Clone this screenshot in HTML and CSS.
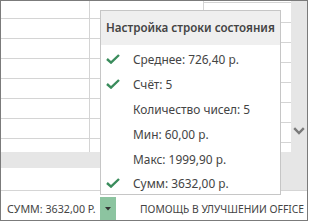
FILE: index.html
```html
<!DOCTYPE html>
<html lang="ru">
<head>
<meta charset="utf-8">
<link rel="stylesheet" href="styles.css">
</head>
<body>
<div class="frame">
  <div class="main">
    <div class="grid">
      <div class="col col-a"></div>
      <div class="col col-b"></div>
      <div class="col col-c"></div>
    </div>
    <div class="vscroll">
      <svg class="chev" width="12" height="8" viewBox="0 0 12 8"><path d="M1.2 1.2 L6 6 L10.8 1.2" fill="none" stroke="#7a7a7a" stroke-width="2.4"/></svg>
    </div>
  </div>
  <div class="hscroll"></div>
  <div class="tabs"><div class="corner"></div></div>
  <div class="status">
    <span class="sum">СУММ: 3632,00 Р.</span>
    <span class="dd"><svg width="6" height="4" viewBox="0 0 6 4"><path d="M0 0 H6 L3 3.5 Z" fill="#333"/></svg></span>
    <span class="help">ПОМОЩЬ В УЛУЧШЕНИИ OFFICE</span>
  </div>

  <div class="popup">
    <div class="title">Настройка строки состояния</div>
    <ul class="items">
      <li class="item on"><span class="chk"><svg width="14" height="10" viewBox="0 0 14 10"><path d="M1 5 L5 8.6 L13 1" fill="none" stroke="#3a8c5c" stroke-width="2.4"/></svg></span>Среднее: 726,40 р.</li>
      <li class="item on"><span class="chk"><svg width="14" height="10" viewBox="0 0 14 10"><path d="M1 5 L5 8.6 L13 1" fill="none" stroke="#3a8c5c" stroke-width="2.4"/></svg></span>Счёт: 5</li>
      <li class="item"><span class="chk"></span>Количество чисел: 5</li>
      <li class="item"><span class="chk"></span>Мин: 60,00 р.</li>
      <li class="item"><span class="chk"></span>Макс: 1999,90 р.</li>
      <li class="item on"><span class="chk"><svg width="14" height="10" viewBox="0 0 14 10"><path d="M1 5 L5 8.6 L13 1" fill="none" stroke="#3a8c5c" stroke-width="2.4"/></svg></span>Сумм: 3632,00 р.</li>
    </ul>
  </div>
</div>
</body>
</html>
```

FILE: styles.css
```css
* { box-sizing: border-box; }
html, body { margin: 0; padding: 0; background: #fff; }
body { width: 309px; height: 223px; overflow: hidden; font-family: "Noto Sans", "Open Sans", sans-serif; color: #444; }

.frame {
  position: relative;
  width: 308px;
  height: 221px;
  border: 1px solid #7b7b7b;
  display: flex;
  flex-direction: column;
}

.main { height: 151px; display: flex; }
.grid { flex: 1; display: flex; }
.col { height: 100%; }
.col-a {
  width: 89px;
  border-right: 1px solid #d4d4d4;
  background: repeating-linear-gradient(to bottom, transparent 0 17px, #d4d4d4 17px 18px, transparent 18px 20px);
}
.col-b {
  width: 114px;
  border-right: 1px solid #d4d4d4;
  background: repeating-linear-gradient(to bottom, transparent 0 17px, #d4d4d4 17px 18px, transparent 18px 20px);
}
.col-c {
  flex: 1;
  background: repeating-linear-gradient(to bottom, transparent 0 1px, #d4d4d4 1px 2px, transparent 2px 20px);
}
.vscroll {
  width: 16px;
  background: #e6e6e6;
  display: flex;
  justify-content: center;
  padding-top: 126px;
}
.chev { display: block; }

.hscroll { height: 16px; background: #e6e6e6; }
.tabs { height: 22px; display: flex; justify-content: flex-end; background: #fff; }
.corner { width: 26px; background: #e6e6e6; }

.status {
  flex: 1;
  border-top: 1px solid #d5d5d5;
  display: flex;
  align-items: flex-end;
  font-size: 10.7px;
  color: #444;
}
.sum { padding-left: 6px; width: 99px; line-height: 22px; white-space: nowrap; }
.dd {
  width: 16px;
  height: 23px;
  background: #8cc4a0;
  display: flex;
  align-items: center;
  justify-content: center;
}
.help { padding-left: 24px; font-size: 10.3px; line-height: 22px; white-space: nowrap; }

.popup {
  position: absolute;
  left: 99px;
  top: 9px;
  width: 181px;
  height: 185px;
  background: #fff;
  border: 1px solid #c6c6c6;
}
.title {
  height: 34px;
  background: #efefef;
  padding-left: 5px;
  font-size: 11.6px;
  font-weight: 600;
  line-height: 34px;
  color: #444;
  white-space: nowrap;
}
.items { list-style: none; margin: 0; padding: 2px 0 0 0; }
.item {
  height: 24.8px;
  display: flex;
  align-items: center;
  font-size: 11.9px;
  color: #444;
  white-space: nowrap;
}
.chk { width: 32px; padding-left: 5px; display: flex; align-items: center; }
.chk svg { display: block; }
```
